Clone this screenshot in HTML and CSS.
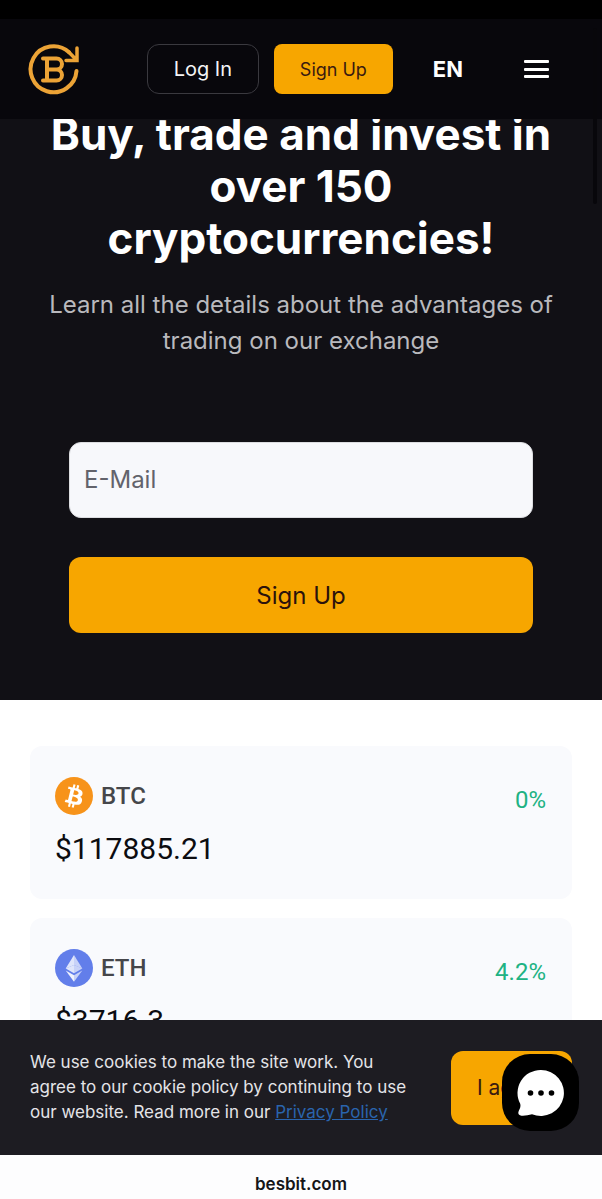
FILE: index.html
```html
<!DOCTYPE html>
<html lang="en">
<head>
<meta charset="utf-8">
<meta name="viewport" content="width=device-width, initial-scale=1">
<title>Besbit</title>
<link rel="stylesheet" href="styles.css">
</head>
<body>
<div class="screen">
  <header class="topbar">
    <a class="logo" href="#" aria-label="Besbit home">
      <svg width="52" height="52" viewBox="0 0 52 52" fill="none" stroke="#eca336" stroke-width="4" stroke-linecap="round">
        <path d="M41 9.200A23 23 0 1 0 48.500 28"/>
        <path d="M49 5v12.500H38M48 16.500L41 9.200" stroke-width="3.500"/>
        <path d="M15 15.500h13.500a5.500 5.500 0 0 1 0 11H20M28.500 26.500a5.500 5.500 0 0 1 0 11H15M19 15.500v22" stroke-width="4"/>
      </svg>
    </a>
    <button class="btn btn-outline" type="button">Log In</button>
    <button class="btn btn-small" type="button">Sign Up</button>
    <button class="lang" type="button">EN</button>
    <button class="menu" type="button" aria-label="Menu">
      <svg width="25" height="20" viewBox="0 0 25 20" fill="#fff"><rect x="0" y="1" width="25" height="3" rx="1"/><rect x="0" y="9" width="25" height="3" rx="1"/><rect x="0" y="16" width="25" height="3" rx="1"/></svg>
    </button>
  </header>
  <div class="scrollbar"></div>

  <main>
    <section class="hero">
      <h1>Buy, trade and invest in over 150 cryptocurrencies!</h1>
      <p>Learn all the details about the advantages of trading on our exchange</p>
      <form class="signup">
        <input type="email" placeholder="E-Mail" aria-label="E-Mail">
        <button type="button">Sign Up</button>
      </form>
    </section>
    <section class="coins">
      <article class="coin">
        <div class="coin-info">
          <div class="coin-name">
            <svg width="38" height="38" viewBox="0 0 32 32"><circle cx="16" cy="16" r="16" fill="#f7931a"/><path fill="#fff" d="M23.189 14.020c.314-2.096-1.283-3.223-3.465-3.975l.708-2.840-1.728-.430-.690 2.765c-.454-.114-.920-.220-1.385-.326l.695-2.783L15.596 6l-.708 2.839c-.376-.086-.746-.170-1.104-.260l.002-.009-2.384-.595-.460 1.846s1.283.294 1.256.312c.700.175.826.638.805 1.006l-.806 3.235c.048.012.110.030.180.057l-.183-.045-1.130 4.532c-.086.212-.303.531-.793.410.018.025-1.256-.313-1.256-.313l-.858 1.978 2.250.561c.418.105.828.215 1.231.318l-.715 2.872 1.727.430.708-2.840c.472.127.930.245 1.378.357l-.706 2.828 1.728.430.715-2.866c2.948.558 5.164.333 6.097-2.333.752-2.146-.037-3.385-1.588-4.192 1.130-.260 1.980-1.003 2.207-2.538zm-3.950 5.538c-.533 2.147-4.148.986-5.320.695l.950-3.805c1.172.293 4.929.872 4.370 3.110zm.535-5.569c-.487 1.953-3.495.960-4.470.717l.860-3.450c.975.243 4.118.696 3.610 2.733z"/></svg>
            <h2>BTC</h2>
          </div>
          <div class="price">$117885.21</div>
        </div>
        <div class="change">0%</div>
      </article>
      <article class="coin">
        <div class="coin-info">
          <div class="coin-name">
            <svg width="38" height="38" viewBox="0 0 32 32"><circle cx="16" cy="16" r="16" fill="#627eea"/><path fill="#fff" fill-opacity=".8" d="M16 5L9 16.500l7-3z"/><path fill="#fff" fill-opacity=".65" d="M16 5l7 11.500-7-3z"/><path fill="#fff" fill-opacity=".8" d="M9 16.500l7-3v7z"/><path fill="#fff" fill-opacity=".65" d="M23 16.500l-7-3v7z"/><path fill="#fff" fill-opacity=".9" d="M9 18l7 4v5.500z"/><path fill="#fff" fill-opacity=".65" d="M23 18l-7 4v5.500z"/></svg>
            <h2>ETH</h2>
          </div>
          <div class="price">$3716.3</div>
        </div>
        <div class="change">4.2%</div>
      </article>
    </section>
  </main>

  <div class="bottom">
    <div class="cookies">
      <p>We use cookies to make the site work. You agree to our cookie policy by continuing to use our website. Read more in our <a href="#">Privacy Policy</a></p>
      <button class="agree" type="button">I agree</button>
      <button class="chat" type="button" aria-label="Open chat">
        <svg width="48" height="48" viewBox="0 0 48 48"><path fill="#fff" d="M24 1a23 23 0 1 1-9 44.200C11 46 6 47.500 3 46.200c-2.500-1-1.800-3.500-.5-6 1-2 1.200-3.500.7-5.400A23 23 0 0 1 24 1z"/><circle cx="13.500" cy="24" r="2.800"/><circle cx="24" cy="24" r="2.800"/><circle cx="34.500" cy="24" r="2.800"/></svg>
      </button>
    </div>
    <div class="address">besbit.com</div>
  </div>
</div>
</body>
</html>
```
FILE: styles.css
```css
* { box-sizing: border-box; }

body {
  margin: 0;
  background: #fff;
  font-family: Inter, "Liberation Sans", sans-serif;
}

button, input { font: inherit; }

button {
  padding: 0;
  border: 0;
  background: none;
  cursor: pointer;
}

svg { display: block; }
h1, h2, p { margin: 0; }

.screen {
  position: relative;
  height: 100vh;
  overflow: hidden;
}

.topbar {
  position: absolute;
  top: 0;
  left: 0;
  right: 0;
  z-index: 2;
  display: flex;
  align-items: center;
  padding: 24px 53px 24px 28px;
  border-top: 19px solid #000;
  background: #08070c;
}

.logo { margin-right: auto; }

.btn {
  height: 50px;
  border-radius: 8px;
  font-size: 18px;
}

.btn-outline {
  width: 112px;
  margin-right: 15px;
  border: 1px solid #3a393f;
  border-radius: 12px;
  color: #f4f4f6;
  font-size: 20px;
}

.btn-small {
  width: 119px;
  background: #f7a600;
  color: #3a1a10;
}

.lang {
  margin: 0 61px 0 40px;
  color: #fff;
  font-size: 22px;
  font-weight: 700;
}

.scrollbar {
  position: absolute;
  top: 28px;
  right: 5px;
  z-index: 3;
  width: 4px;
  height: 176px;
  border-radius: 2px;
  background: #08070b;
}

.hero {
  padding: 108px 40px 67px;
  background: #111015;
  text-align: center;
}

.hero h1 {
  color: #fff;
  font-size: 44px;
  font-weight: 700;
  line-height: 52px;
}

.hero p {
  margin-top: 23px;
  color: #b9b9bd;
  font-size: 24px;
  line-height: 36px;
}

.signup {
  display: grid;
  gap: 39px;
  margin: 83px 29px 0;
}

.signup input,
.signup button {
  width: 100%;
  height: 76px;
  border-radius: 12px;
  font-size: 24px;
}

.signup input {
  padding: 0 14px 2px;
  border: 1px solid #dcdde0;
  background: #f7f8fb;
}

.signup input::placeholder { color: #62636b; opacity: 1; }

.signup button {
  background: #f7a600;
  color: #2b120c;
}

.coins {
  display: grid;
  gap: 19px;
  padding: 46px 30px;
  font-family: Roboto, "Liberation Sans", sans-serif;
}

.coin {
  display: flex;
  justify-content: space-between;
  padding: 31px 26px 32px 25px;
  border-radius: 12px;
  background: #f9fafd;
}

.coin-name {
  display: flex;
  align-items: center;
  gap: 8px;
}

.coin-name h2 {
  color: #45464a;
  font-size: 24px;
  font-weight: 500;
}

.price {
  margin-top: 15px;
  color: #0c0c10;
  font-size: 30px;
  line-height: 37px;
}

.change {
  margin-top: 7px;
  color: #20b283;
  font-size: 24px;
  line-height: 32px;
}

.bottom {
  position: absolute;
  left: 0;
  right: 0;
  bottom: 0;
  z-index: 2;
}

.cookies {
  position: relative;
  display: flex;
  align-items: center;
  justify-content: space-between;
  gap: 40px;
  padding: 30px;
  background: #1d1c22;
  color: #e4e4e8;
}

.cookies p {
  font-size: 17px;
  line-height: 25px;
}

.cookies a { color: #2a64ad; }

.agree {
  flex: 0 0 121px;
  height: 74px;
  padding-left: 26px;
  border-radius: 12px;
  background: #f7a600;
  color: #3a1a10;
  font-size: 21px;
  text-align: left;
}

.chat {
  position: absolute;
  right: 23px;
  bottom: 24px;
  display: grid;
  place-items: center;
  width: 77px;
  height: 77px;
  border-radius: 28px;
  background: #000;
}

.address {
  padding: 18px 0 4px;
  background: #fdfdfe;
  color: #151518;
  font-size: 17px;
  font-weight: 600;
  line-height: 22px;
  text-align: center;
}
```
